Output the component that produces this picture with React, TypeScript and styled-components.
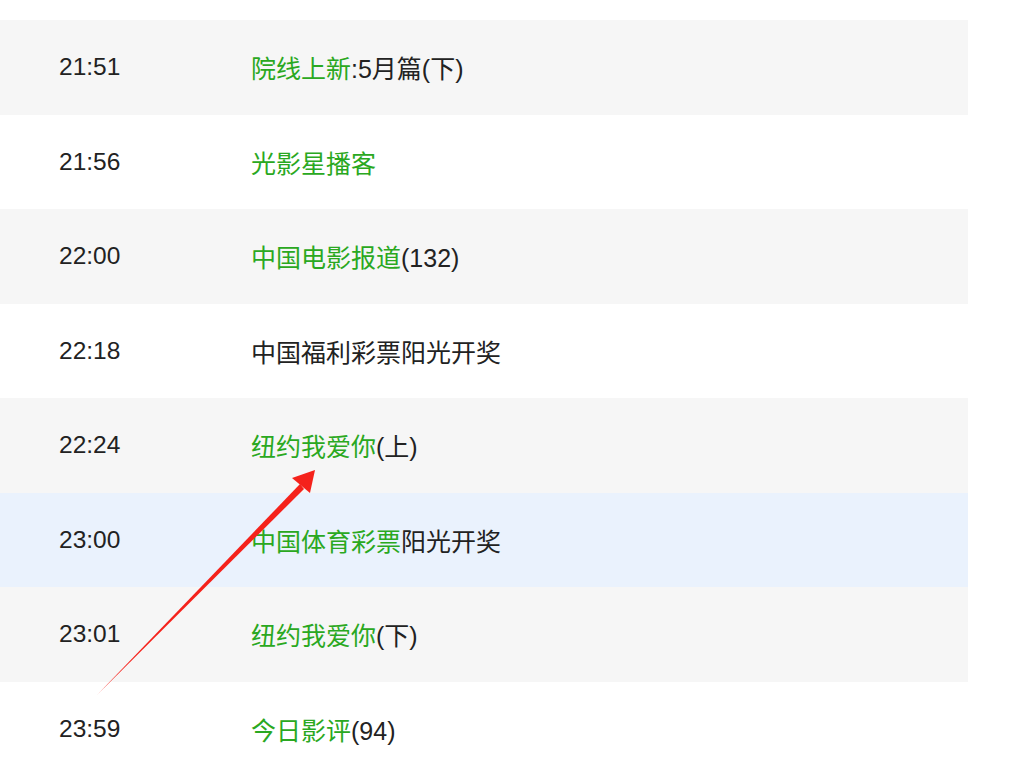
import React from "react";
import styled, { createGlobalStyle } from "styled-components";

const GlobalStyle = createGlobalStyle`
    body, html {
        margin: 0;
        padding: 0;
        background: #ffffff;
        overflow: hidden;
    }
`;

const Page = styled.div`
    position: relative;
    width: 1014px;
    height: 771px;
    padding-top: 20px;
    box-sizing: border-box;
    font-family: "Liberation Sans", Arial, "Noto Sans CJK SC", sans-serif;
`;

const List = styled.div`
    display: flex;
    flex-direction: column;
    width: 968px;
`;

const Row = styled.div<{ $tone: "gray" | "white" | "blue" }>`
    display: flex;
    align-items: center;
    height: 94.5px;
    color: #222222;
    background-color: ${(p) =>
        p.$tone === "gray" ? "#f6f6f6" : p.$tone === "blue" ? "#eaf2fd" : "#ffffff"};
`;

const Time = styled.div`
    width: 192px;
    padding-left: 59px;
    font-size: 24.5px;
`;

const Title = styled.div`
    white-space: nowrap;
    font-size: 25px;
`;

const Link = styled.span`
    color: #2aa821;
`;

const Arrow = styled.svg`
    position: absolute;
    left: 0;
    top: 0;
    pointer-events: none;
`;

type Item = { time: string; link?: string; rest?: string; tone: "gray" | "white" | "blue" };

const items: Item[] = [
    { time: "21:51", link: "院线上新", rest: ":5月篇(下)", tone: "gray" },
    { time: "21:56", link: "光影星播客", tone: "white" },
    { time: "22:00", link: "中国电影报道", rest: "(132)", tone: "gray" },
    { time: "22:18", rest: "中国福利彩票阳光开奖", tone: "white" },
    { time: "22:24", link: "纽约我爱你", rest: "(上)", tone: "gray" },
    { time: "23:00", link: "中国体育彩票", rest: "阳光开奖", tone: "blue" },
    { time: "23:01", link: "纽约我爱你", rest: "(下)", tone: "gray" },
    { time: "23:59", link: "今日影评", rest: "(94)", tone: "white" },
];

const App: React.FC = () => {
    return (
        <>
            <GlobalStyle />
            <Page>
                <List>
                    {items.map((it) => (
                        <Row key={it.time} $tone={it.tone}>
                            <Time>{it.time}</Time>
                            <Title>
                                {it.link && <Link>{it.link}</Link>}
                                {it.rest}
                            </Title>
                        </Row>
                    ))}
                </List>
                {/* 标注箭头 */}
                <Arrow width="1014" height="771" viewBox="0 0 1014 771">
                    <polygon points="97,695 300,484 304,489" fill="#f5221b" />
                    <polygon points="315,470 292,478 310,493" fill="#f5221b" />
                </Arrow>
            </Page>
        </>
    );
};

export default App;
